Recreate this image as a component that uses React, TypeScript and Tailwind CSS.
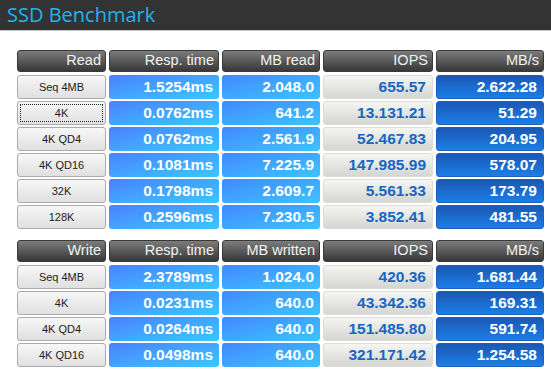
const readRows = [
  { name: 'Seq 4MB', resp: '1.5254ms', mb: '2.048.0', iops: '655.57', mbs: '2.622.28' },
  { name: '4K', resp: '0.0762ms', mb: '641.2', iops: '13.131.21', mbs: '51.29', focus: true },
  { name: '4K QD4', resp: '0.0762ms', mb: '2.561.9', iops: '52.467.83', mbs: '204.95' },
  { name: '4K QD16', resp: '0.1081ms', mb: '7.225.9', iops: '147.985.99', mbs: '578.07' },
  { name: '32K', resp: '0.1798ms', mb: '2.609.7', iops: '5.561.33', mbs: '173.79' },
  { name: '128K', resp: '0.2596ms', mb: '7.230.5', iops: '3.852.41', mbs: '481.55' },
]

const writeRows = [
  { name: 'Seq 4MB', resp: '2.3789ms', mb: '1.024.0', iops: '420.36', mbs: '1.681.44' },
  { name: '4K', resp: '0.0231ms', mb: '640.0', iops: '43.342.36', mbs: '169.31' },
  { name: '4K QD4', resp: '0.0264ms', mb: '640.0', iops: '151.485.80', mbs: '591.74' },
  { name: '4K QD16', resp: '0.0498ms', mb: '640.0', iops: '321.171.42', mbs: '1.254.58' },
]

type Row = { name: string; resp: string; mb: string; iops: string; mbs: string; focus?: boolean }

const cols = 'grid grid-cols-[89px_110px_98px_110px_108px] gap-x-[3px]'
const num = "font-['Liberation_Sans',Arial,sans-serif] font-bold text-[15.5px] flex items-center justify-end pr-[6px] rounded-[3px] h-[24px]"

function Header({ labels }: { labels: string[] }) {
  return (
    <div className={`${cols} mb-[3px]`}>
      {labels.map((l) => (
        <div
          key={l}
          className="h-[22px] rounded-[3px] border border-[#3a3a3a] bg-gradient-to-b from-[#7c7c7c] to-[#383838] flex items-center justify-end pr-[4px] text-[14.5px] text-[#f2f2f2] font-['Liberation_Sans',Arial,sans-serif]"
        >
          {l}
        </div>
      ))}
    </div>
  )
}

function Table({ labels, rows }: { labels: string[]; rows: Row[] }) {
  return (
    <div>
      <Header labels={labels} />
      <div className="flex flex-col gap-y-[2px]">
        {rows.map((r, i) => (
          <div key={i} className={cols}>
            <div className="h-[24px] rounded-[3px] border border-[#ababab] bg-gradient-to-b from-[#f7f7f7] to-[#e0e0e0] p-[2px]">
              <div
                className={`h-full flex items-center justify-center text-[11px] text-[#222] font-['Liberation_Sans',Arial,sans-serif] ${
                  r.focus ? 'border border-dotted border-[#222]' : ''
                }`}
              >
                {r.name}
              </div>
            </div>
            <div className={`${num} text-white bg-gradient-to-br from-[#4a80ff] to-[#36c8ff]`}>{r.resp}</div>
            <div className={`${num} text-white bg-gradient-to-br from-[#4388ff] to-[#3bc4ff]`}>{r.mb}</div>
            <div className={`${num} text-[#1766c2] border border-[#dcdcd8] bg-gradient-to-b from-[#f5f5f3] to-[#d5d5d1]`}>{r.iops}</div>
            <div className={`${num} text-white border border-[#1c5fbf] bg-gradient-to-b from-[#1b58b4] to-[#1b7ee6]`}>{r.mbs}</div>
          </div>
        ))}
      </div>
    </div>
  )
}

export default function App() {
  return (
    <div className="w-[551px] h-[391px] bg-white overflow-hidden">
      <div className="h-[31px] bg-[#333333] border-b border-[#c4c4c4] flex items-center pl-[7px]">
        <h1 className="text-[20px] leading-none text-[#1db4f0] font-['Open_Sans','Noto_Sans',sans-serif]">SSD Benchmark</h1>
      </div>
      <div className="pl-[17px] pt-[19px] flex flex-col gap-y-[11px]">
        <Table labels={['Read', 'Resp. time', 'MB read', 'IOPS', 'MB/s']} rows={readRows} />
        <Table labels={['Write', 'Resp. time', 'MB written', 'IOPS', 'MB/s']} rows={writeRows} />
      </div>
    </div>
  )
}
